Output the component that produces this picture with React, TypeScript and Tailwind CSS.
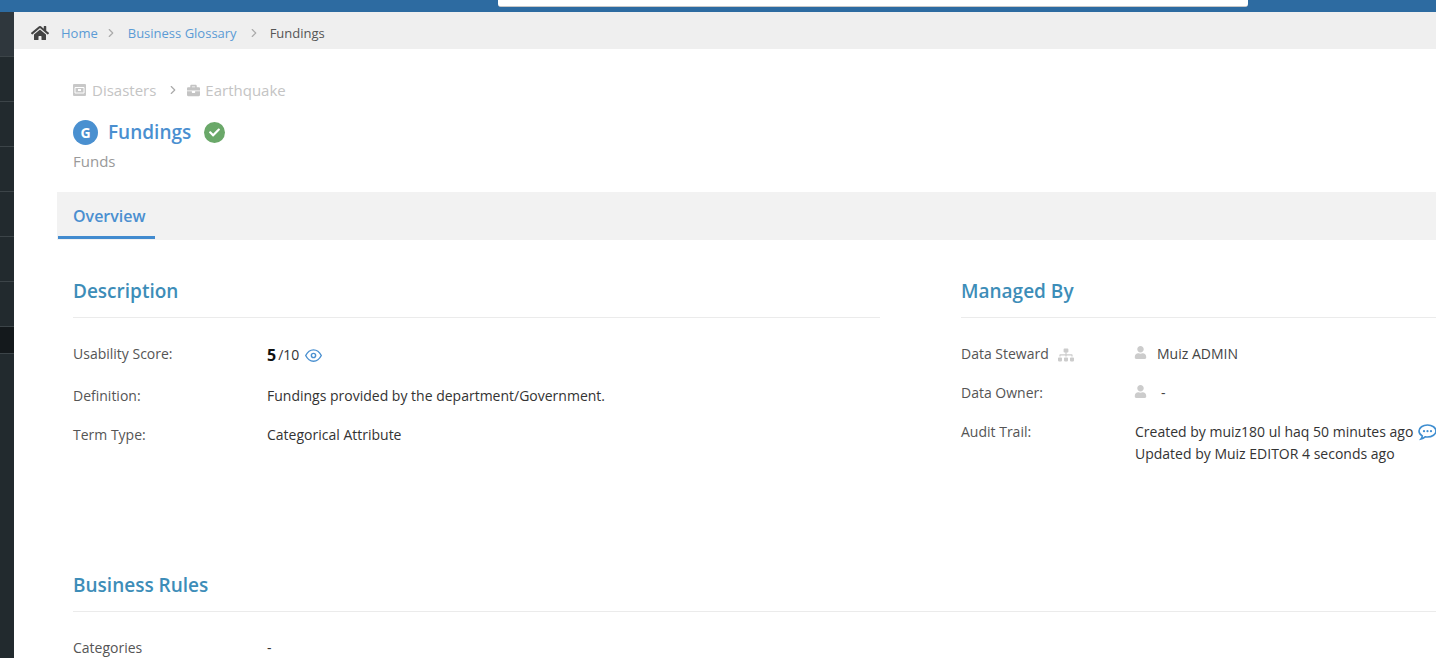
import { FaHome, FaBriefcase, FaUser, FaSitemap, FaCheck } from "react-icons/fa";
import { FiEye, FiChevronRight } from "react-icons/fi";

const sans = "font-['Open_Sans',sans-serif]";

function Row({ label, children, h }: { label: React.ReactNode; children: React.ReactNode; h: string }) {
  return (
    <div className={`flex items-start ${h}`}>
      <div className="w-[194px] shrink-0 text-[#555]">{label}</div>
      <div className="text-[#333]">{children}</div>
    </div>
  );
}

function SidebarItem({ h, bg }: { h: string; bg: string }) {
  return <div className={`${h} ${bg} border-b border-[#3c4448]`} />;
}

function FolderBox() {
  return (
    <svg width="13" height="12" viewBox="0 0 13 12" className="mr-[6px] shrink-0">
      <rect x="0" y="0" width="13" height="12" rx="1" fill="#c8c8c8" />
      <path d="M2 3.5h9M2 3.5v5.5h9V3.5" fill="none" stroke="#fff" strokeWidth="1" />
      <rect x="5" y="5" width="3" height="2" fill="#fff" />
    </svg>
  );
}

function Bubble() {
  return (
    <svg width="19" height="17" viewBox="0 0 19 17" className="ml-[5px] shrink-0">
      <path d="M9.5 1c4.6 0 8.5 2.6 8.5 6s-3.900 6-8.500 6c-.9 0-1.600-.1-2.400-.2-1.100 1-2.500 1.800-4.100 2.200.8-1 1.200-2 1.300-3.100C2.200 10.700 1 9 1 7c0-3.400 3.900-6 8.500-6z" fill="none" stroke="#3f8ed0" strokeWidth="1.6" />
      <circle cx="6" cy="7.200" r="1.100" fill="#3f8ed0" />
      <circle cx="9.500" cy="7.200" r="1.100" fill="#3f8ed0" />
      <circle cx="13" cy="7.200" r="1.100" fill="#3f8ed0" />
    </svg>
  );
}

export default function App() {
  return (
    <div className={`${sans} w-[1436px] h-[658px] overflow-hidden bg-white text-[14px] leading-[20px] flex flex-col`}>
      <header className="h-[12px] shrink-0 bg-[#2d6ba1] flex justify-start pl-[498px]">
        <div className="w-[750px] h-[7px] bg-white rounded-b-[3px] border-b border-[#c8c8c8]" />
      </header>
      <div className="flex flex-1 min-h-0">
        <aside className="w-[14px] shrink-0 bg-[#222a2e] flex flex-col">
          <SidebarItem h="h-[45px]" bg="bg-[#2f373d]" />
          <SidebarItem h="h-[45px]" bg="bg-[#222a2e]" />
          <SidebarItem h="h-[45px]" bg="bg-[#222a2e]" />
          <SidebarItem h="h-[45px]" bg="bg-[#222a2e]" />
          <SidebarItem h="h-[45px]" bg="bg-[#222a2e]" />
          <SidebarItem h="h-[45px]" bg="bg-[#222a2e]" />
          <SidebarItem h="h-[45px]" bg="bg-[#222a2e]" />
          <SidebarItem h="h-[27px]" bg="bg-[#14191c]" />
        </aside>
        <main className="flex-1 min-w-0 overflow-hidden">
          <nav className="h-[37px] bg-[#efefef] flex items-center pl-[17px] pt-[4px] text-[13px]">
            <FaHome className="text-[#444] text-[18px] mr-[12px]" />
            <span className="text-[#5b9bd5]">Home</span>
            <FiChevronRight className="text-[#aaa] mx-[6px] text-[14px]" />
            <span className="text-[#5b9bd5] ml-[4px]">Business Glossary</span>
            <FiChevronRight className="text-[#aaa] ml-[10px] mr-[6px] text-[14px]" />
            <span className="text-[#555] ml-[3px]">Fundings</span>
          </nav>
          <div className="pl-[59px]">
            <div className="h-[143px] pt-[31px]">
              <div className="flex items-center text-[#c4c4c4] text-[15px] h-[20px]">
                <FolderBox />
                <span>Disasters</span>
                <FiChevronRight className="text-[#aaa] text-[14px] ml-[10px] mr-[7px]" />
                <FaBriefcase className="text-[13px] mr-[5px]" />
                <span>Earthquake</span>
              </div>
              <div className="flex items-center mt-[20px] h-[25px]">
                <div className="w-[25px] h-[25px] rounded-full bg-[#4a90d0] flex items-center justify-center text-white text-[14px] font-bold">G</div>
                <span className="ml-[10px] text-[19px] font-semibold text-[#4a8fd0] -mt-[2px]">Fundings</span>
                <div className="ml-[13px] w-[21px] h-[21px] rounded-full bg-[#6aa869] flex items-center justify-center text-white text-[11px]"><FaCheck /></div>
              </div>
              <div className="mt-[6px] text-[#999] text-[15px]">Funds</div>
            </div>
          </div>
          <div className="ml-[43px] h-[48px] bg-[#f2f2f2] flex">
            <div className="ml-[1px] h-[47px] w-[97px] border-b-[3px] border-[#428bcf] pl-[15px] pt-[14px] text-[#4a8fd0] text-[16px] font-semibold">Overview</div>
          </div>
          <div className="pl-[59px] flex">
            <section className="w-[807px] shrink-0 pt-[37px]">
              <h2 className="text-[19px] leading-[28px] font-semibold text-[#3d8db8] h-[41px] border-b border-[#ebebeb]">Description</h2>
              <div className="pt-[26px]">
                <Row label="Usability Score:" h="h-[42px]">
                  <span className="flex items-center h-[22px]">
                    <span className="font-bold text-[16px] text-[#111]">5</span>
                    <span className="ml-[2px]">/10</span>
                    <FiEye className="ml-[6px] text-[#4a90d0] text-[17px]" />
                  </span>
                </Row>
                <Row label="Definition:" h="h-[39px]">Fundings provided by the department/Government.</Row>
                <Row label="Term Type:" h="h-[39px]">Categorical Attribute</Row>
              </div>
            </section>
            <section className="ml-[81px] flex-1 min-w-0 pt-[37px]">
              <h2 className="text-[19px] leading-[28px] font-semibold text-[#3d8db8] h-[41px] border-b border-[#ebebeb]">Managed By</h2>
              <div className="pt-[26px]">
                <div className="flex h-[39px]">
                  <div className="w-[174px] shrink-0 flex text-[#555] items-start">
                    Data Steward
                    <FaSitemap className="ml-[9px] mt-[3px] text-[#ccc] text-[16px]" />
                  </div>
                  <div className="flex text-[#444]">
                    <FaUser className="text-[#ccc] text-[13px] mt-[2px] -ml-[1px] mr-[10px]" />
                    <span>Muiz ADMIN</span>
                  </div>
                </div>
                <div className="flex h-[39px]">
                  <div className="w-[174px] shrink-0 text-[#555]">Data Owner:</div>
                  <div className="flex text-[#444]">
                    <FaUser className="text-[#ccc] text-[13px] mt-[2px] -ml-[1px] mr-[14px]" />
                    -
                  </div>
                </div>
                <div className="flex">
                  <div className="w-[174px] shrink-0 text-[#555]">Audit Trail:</div>
                  <div className="text-[#333] leading-[22px] whitespace-nowrap -mt-[1px]">
                    <div className="flex items-center">
                      Created by muiz180 ul haq 50 minutes ago
                      <Bubble />
                    </div>
                    <div>Updated by Muiz EDITOR 4 seconds ago</div>
                  </div>
                </div>
              </div>
            </section>
          </div>
          <section className="pl-[59px] mt-[106px]">
            <h2 className="text-[19px] leading-[28px] font-semibold text-[#3d8db8] h-[41px] border-b border-[#ebebeb]">Business Rules</h2>
            <div className="pt-[26px] flex">
              <div className="w-[194px] shrink-0 text-[#555]">Categories</div>
              <div className="text-[#333]">-</div>
            </div>
          </section>
        </main>
      </div>
    </div>
  );
}
